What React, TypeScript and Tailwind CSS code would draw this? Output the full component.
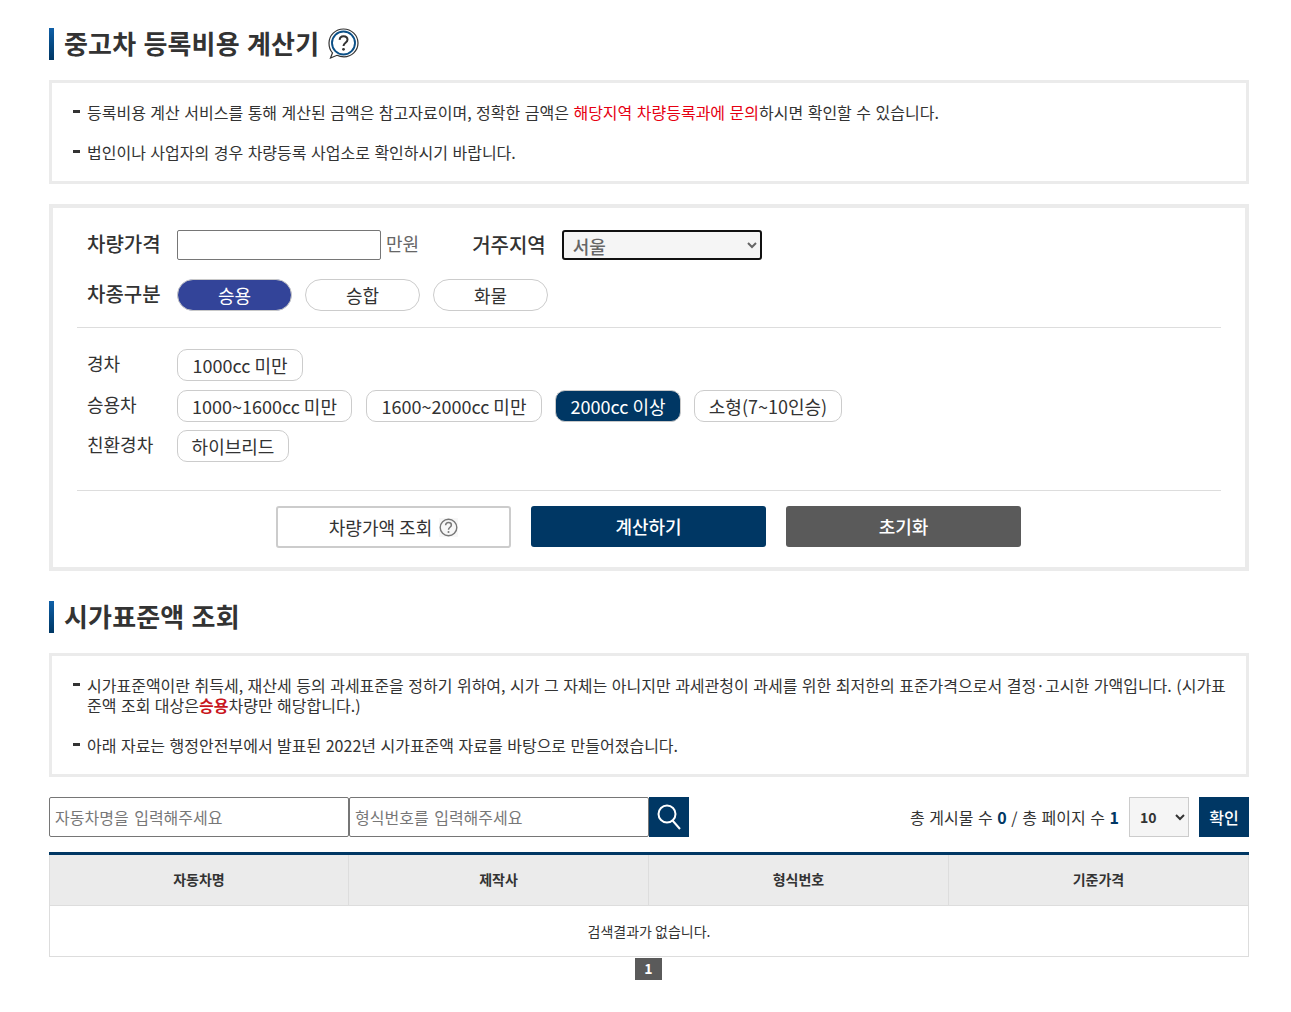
import React from "react";

const font = { fontFamily: '"Noto Sans CJK KR", "Noto Sans", sans-serif' };

function Heading({ children }: { children: React.ReactNode }) {
  return (
    <div className="flex h-8 items-center">
      <span className="h-8 w-[5px] bg-gradient-to-b from-[#1060a8] to-[#003764]" />
      <h2 className="ml-[10px] -translate-y-[1px] text-[26px] leading-8 font-bold tracking-[0.15px] [word-spacing:1.2px] text-[#333]">{children}</h2>
    </div>
  );
}

function Bullet({ children }: { children: React.ReactNode }) {
  return (
    <div className="relative pl-[35px] pr-[20px] text-[16px] leading-5 [word-spacing:0.9px] text-[#333]">
      <span className="absolute left-[21px] top-[8px] h-[3px] w-[7px] bg-[#333]" />
      {children}
    </div>
  );
}

function Pill({ children, active, w }: { children: React.ReactNode; active?: boolean; w: string }) {
  return (
    <button className={`h-8 rounded-2xl border text-[18px] leading-none ${w} ${active ? "border-[#c8c8c8] bg-[#334499] text-white" : "border-[#ccc] bg-white text-[#333]"}`}>
      {children}
    </button>
  );
}

function Chip({ children, active, w }: { children: React.ReactNode; active?: boolean; w: string }) {
  return (
    <button className={`h-8 rounded-[10px] border text-[18px] leading-none ${w} ${active ? "border-[#c8c8c8] bg-[#003764] text-white" : "border-[#ccc] bg-white text-[#333]"}`}>
      {children}
    </button>
  );
}

function ChipRow({ label, children, className }: { label: string; children: React.ReactNode; className?: string }) {
  return (
    <div className={`flex h-8 items-center ${className ?? ""}`}>
      <span className="w-[90px] -translate-y-[2px] text-[18px] text-[#333]">{label}</span>
      <div className="flex gap-[13px]">{children}</div>
    </div>
  );
}

export default function App() {
  return (
    <div style={font} className="min-h-[1012px] w-[1291px] bg-white pt-7">
      <div className="ml-[49px] w-[1200px]">
        <div className="flex items-center">
          <Heading>중고차 등록비용 계산기</Heading>
          <svg className="ml-[9px] -translate-y-[1px]" width="31" height="31" viewBox="0 0 31 31" fill="none">
            <path d="M15.5 1C23.5 1 30 7.2 30 15C30 22.8 23.5 28.8 16 28.8C13 28.8 11 28.3 9 27.3L2.5 30L4.5 24.8C2.2 22.5 1 19 1 15C1 7.2 7.5 1 15.5 1Z" stroke="#333" strokeWidth="1.2" />
            <circle cx="15.5" cy="15" r="11.5" stroke="#0b4f86" strokeWidth="1.9" />
            <path d="M11.6 11.8C11.8 9.4 13.5 8.2 15.5 8.2C17.8 8.2 19.5 9.6 19.5 11.7C19.5 14.6 15.5 14.9 15.5 18" stroke="#333" strokeWidth="2" />
            <circle cx="15.5" cy="21.3" r="1.4" fill="#333" />
          </svg>
        </div>

        <div className="mt-[20px] flex h-[104px] flex-col gap-5 border-[3px] border-[#ebebeb] pt-[19px]">
          <Bullet>
            등록비용 계산 서비스를 통해 계산된 금액은 참고자료이며, 정확한 금액은 <span className="text-[#e60012]">해당지역 차량등록과에 문의</span>하시면 확인할 수 있습니다.
          </Bullet>
          <Bullet>법인이나 사업자의 경우 차량등록 사업소로 확인하시기 바랍니다.</Bullet>
        </div>

        <div className="mt-[20px] h-[367px] border-4 border-[#ebebeb] px-[24px] pt-[22px]">
          <div className="flex h-[30px] items-center pl-[10px]">
            <span className="w-[90px] -translate-y-[1px] text-[20px] font-medium text-[#333]">차량가격</span>
            <input className="h-[30px] w-[204px] rounded-[2px] border border-[#767676] bg-white" />
            <span className="ml-[5px] -translate-y-[2px] text-[18px] text-[#666]">만원</span>
            <span className="ml-[53px] text-[20px] font-medium text-[#333]">거주지역</span>
            <select className="ml-4 h-[30px] w-[200px] rounded-[3px] border-2 border-[#111] bg-[#f5f5f5] pl-[5px] text-[18px] font-medium text-[#666]" defaultValue="서울">
              <option>서울</option>
            </select>
          </div>
          <div className="mt-[19px] flex h-8 items-center pl-[10px]">
            <span className="w-[90px] -translate-y-[1px] text-[20px] font-medium text-[#333]">차종구분</span>
            <div className="flex gap-[13px]">
              <Pill active w="w-[115px]">승용</Pill>
              <Pill w="w-[115px]">승합</Pill>
              <Pill w="w-[115px]">화물</Pill>
            </div>
          </div>
          <hr className="mt-4 border-[#ddd]" />
          <div className="mt-[21px] pl-[10px]">
            <ChipRow label="경차">
              <Chip w="w-[126px]">1000cc 미만</Chip>
            </ChipRow>
            <ChipRow label="승용차" className="mt-[9px]">
              <Chip w="w-[175px] mr-[1px]">1000~1600cc 미만</Chip>
              <Chip w="w-[176px]">1600~2000cc 미만</Chip>
              <Chip active w="w-[126px]">2000cc 이상</Chip>
              <Chip w="w-[148px]">소형(7~10인승)</Chip>
            </ChipRow>
            <ChipRow label="친환경차" className="mt-2">
              <Chip w="w-[112px]">하이브리드</Chip>
            </ChipRow>
          </div>
          <hr className="mt-[28px] border-[#ddd]" />
          <div className="mt-[15px] flex justify-center gap-5 pr-[1px]">
            <button className="flex h-[42px] w-[235px] items-center justify-center gap-[7px] rounded-[3px] border-2 border-[#ccc] bg-white text-[18px] text-[#333]">
              차량가액 조회
              <svg width="19" height="19" viewBox="0 0 19 19" fill="none">
                <rect width="19" height="19" fill="#f7f7f7" />
                <circle cx="9.5" cy="9.5" r="8.3" stroke="#777" strokeWidth="1.4" />
                <path d="M6.6 7.3C6.7 5.4 8 4.5 9.5 4.5C11.1 4.5 12.4 5.5 12.4 7C12.4 9.2 9.5 9.4 9.5 11.8" stroke="#777" strokeWidth="1.5" />
                <circle cx="9.5" cy="14" r="1" fill="#777" />
              </svg>
            </button>
            <button className="h-[41px] w-[235px] rounded-[3px] bg-[#003764] text-[18px] font-medium text-white">계산하기</button>
            <button className="h-[41px] w-[235px] rounded-[3px] bg-[#5a5a5a] text-[18px] font-medium text-white">초기화</button>
          </div>
        </div>

        <div className="mt-[30px]">
          <Heading>시가표준액 조회</Heading>
        </div>

        <div className="mt-[20px] flex h-[124px] flex-col gap-5 border-[3px] border-[#ebebeb] pt-[19px]">
          <Bullet>
            시가표준액이란 취득세, 재산세 등의 과세표준을 정하기 위하여, 시가 그 자체는 아니지만 과세관청이 과세를 위한 최저한의 표준가격으로서 결정·고시한 가액입니다. (시가표준액 조회 대상은<span className="font-bold text-[#c8161d]">승용</span>차량만 해당합니다.)
          </Bullet>
          <Bullet>아래 자료는 행정안전부에서 발표된 2022년 시가표준액 자료를 바탕으로 만들어졌습니다.</Bullet>
        </div>

        <div className="mt-[20px] flex h-10 items-center">
          <input placeholder="자동차명을 입력해주세요" className="h-10 w-[300px] rounded-[2px] border border-[#767676] px-[5px] text-[16px] [word-spacing:2px] placeholder:text-[#777]" />
          <input placeholder="형식번호를 입력해주세요" className="h-10 w-[300px] rounded-[2px] border border-[#767676] px-[5px] text-[16px] [word-spacing:2px] placeholder:text-[#777]" />
          <button className="flex h-10 w-10 items-center justify-center bg-[#003764]">
            <svg width="26" height="28" viewBox="0 0 26 28" fill="none">
              <circle cx="11" cy="11" r="8.5" stroke="white" strokeWidth="2" />
              <path d="M16.5 17.5L24 26" stroke="white" strokeWidth="2" />
            </svg>
          </button>
          <div className="ml-auto flex items-center">
            <span className="text-[16px] [word-spacing:1px] text-[#333]">
              총 게시물 수 <b className="text-[#003764]">0</b> / 총 페이지 수 <b className="text-[#003764]">1</b>
            </span>
            <select className="ml-[10px] h-10 w-[60px] border border-[#ccc] bg-[#f5f5f5] pl-[6px] text-[14px] font-semibold text-[#333]" defaultValue="10">
              <option>10</option>
            </select>
            <button className="ml-[10px] h-10 w-[50px] bg-[#003764] text-[16px] font-medium text-white">확인</button>
          </div>
        </div>

        <div className="mt-[15px] border-t-[3px] border-[#003764]">
          <div className="grid h-[51px] grid-cols-4 border-b border-[#ddd] bg-[#ebebeb] text-[14px] font-bold text-[#333]">
            {["자동차명", "제작사", "형식번호", "기준가격"].map((t, i) => (
              <div key={t} className={`flex items-center justify-center border-r border-[#ddd] pb-[2px] ${i === 0 ? "border-l" : ""}`}>
                {t}
              </div>
            ))}
          </div>
          <div className="flex h-[51px] items-center justify-center border-x border-b border-[#ddd] text-[14px] text-[#333]">
            검색결과가 없습니다.
          </div>
        </div>

        <div className="mt-[1px] flex justify-center pr-[1px]">
          <span className="flex h-[22px] w-[27px] items-center justify-center bg-[#5a5a5a] pb-[2px] text-[14px] font-bold text-white">1</span>
        </div>
      </div>
    </div>
  );
}
